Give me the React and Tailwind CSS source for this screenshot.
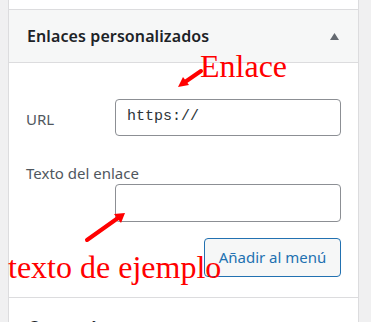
export default function App() {
  const sans = { fontFamily: '"Noto Sans", "Open Sans", sans-serif' };
  return (
    <div className="relative w-[371px] h-[322px] overflow-hidden bg-[#f0f0f1] pl-[8px] pr-[12px]" style={sans}>
      <div className="h-full bg-white border-x border-[#dcdcde]">
        <div className="h-[10px] border-b border-[#dcdcde]" />
        <div className="h-[53px] bg-[#f6f7f7] border-b border-[#dcdcde] flex items-center justify-between pl-[18px] pr-[19px]">
          <h3 className="text-[16px] font-semibold text-[#1d2327] tracking-[0.1px]">Enlaces personalizados</h3>
          <svg width="9" height="7" viewBox="0 0 9 7"><path d="M4.5 0L9 7H0z" fill="#646970" /></svg>
        </div>
        <div className="px-[17px] pt-[36px] pb-[20px] border-b border-[#dcdcde]">
          <div className="flex items-center">
            <label className="w-[89px] pt-[4px] text-[15px] text-[#50575e]">URL</label>
            <div className="w-[226px] h-[37px] rounded-[4px] border border-[#8c8f94] flex items-center px-[11px] text-[15px] text-[#2c3338]" style={{ fontFamily: '"Liberation Mono", monospace' }}>
              https://
            </div>
          </div>
          <div className="mt-[27px] h-[20px] leading-[20px] text-[15px] text-[#50575e]">Texto del enlace</div>
          <div className="mt-[1px] ml-[89px] w-[226px] h-[38px] rounded-[4px] border border-[#8c8f94]" />
          <div className="mt-[16px] flex justify-end">
            <button className="w-[137px] h-[39px] rounded-[4px] border border-[#2271b1] bg-[#f6f7f7] text-[#2271b1] text-[15px]">Añadir al menú</button>
          </div>
        </div>
        <div className="pl-[19px] pt-[17px] text-[16px] font-semibold text-[#1d2327]">Categorías</div>
      </div>

      <div className="absolute left-[200px] top-[50px] text-[32px] leading-none text-[#ff0000]" style={{ fontFamily: '"Liberation Serif", serif' }}>Enlace</div>
      <div className="absolute left-[8px] top-[251px] text-[32px] leading-none text-[#ff0000]" style={{ fontFamily: '"Liberation Serif", serif' }}>texto de ejemplo</div>

      <svg className="absolute left-0 top-0" width="371" height="322" viewBox="0 0 371 322">
        <line x1="201" y1="71" x2="185" y2="82" stroke="#ff0000" strokeWidth="4" strokeLinecap="round" />
        <path d="M178 87L183 77L189 85z" fill="#ff0000" />
        <line x1="87" y1="240" x2="118" y2="218" stroke="#ff0000" strokeWidth="4" strokeLinecap="round" />
        <path d="M125 213L121 223L114 214z" fill="#ff0000" />
      </svg>
    </div>
  );
}
